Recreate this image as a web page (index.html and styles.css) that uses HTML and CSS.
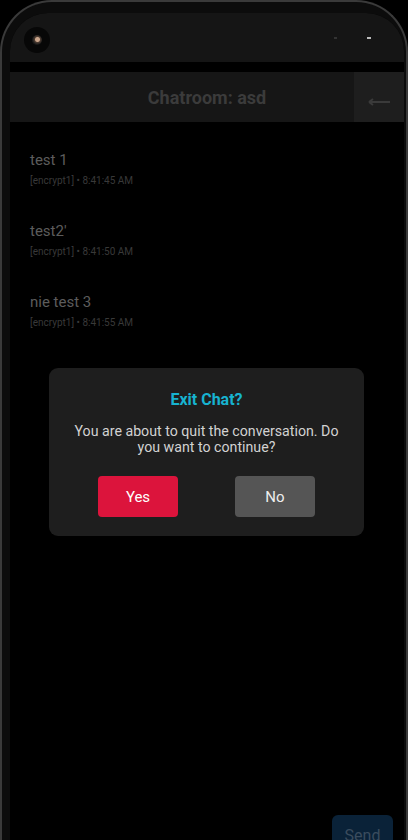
FILE: index.html
```html
<!DOCTYPE html>
<html>
<head>
<meta charset="utf-8">
<link rel="stylesheet" href="styles.css">
</head>
<body>
<div class="phone">
  <div class="speaker"></div>
  <div class="screen">
    <div class="statusbar">
      <div class="camera"><div class="lens"></div></div>
      <div class="status-icons"><span class="dot dim"></span><span class="dot"></span></div>
    </div>
    <div class="gap"></div>
    <div class="header">
      <div class="title">Chatroom: asd</div>
      <button class="back">
        <svg width="24" height="10" viewBox="0 0 24 10"><path d="M2 5H23M2 5L6 2M2 5L6 8" stroke="#3a3a3a" stroke-width="2" fill="none"/></svg>
      </button>
    </div>
    <div class="messages">
      <div class="msg"><div class="text">test 1</div><div class="meta">[encrypt1] • 8:41:45 AM</div></div>
      <div class="msg"><div class="text">test2'</div><div class="meta">[encrypt1] • 8:41:50 AM</div></div>
      <div class="msg"><div class="text">nie test 3</div><div class="meta">[encrypt1] • 8:41:55 AM</div></div>
    </div>
    <div class="footer"><button class="send">Send</button></div>
    <div class="dialog">
      <div class="dlg-title">Exit Chat?</div>
      <div class="dlg-body">You are about to quit the conversation. Do you want to continue?</div>
      <div class="dlg-actions">
        <button class="btn yes">Yes</button>
        <button class="btn no">No</button>
      </div>
    </div>
  </div>
</div>
</body>
</html>
```
FILE: styles.css
```css
* { box-sizing: border-box; }
html, body { margin: 0; padding: 0; background: #000; }
body { font-family: Roboto, "Noto Sans", sans-serif; width: 408px; height: 840px; overflow: hidden; }
.phone {
  position: relative;
  width: 408px; height: 840px;
  background: #0c0c0c;
  border: 2px solid #3a3a3a;
  border-bottom: none;
  border-radius: 52px 52px 0 0;
  padding: 11px 2px 0 8px;
  overflow: hidden;
}
.speaker {
  position: absolute; top: -2px; left: 160px; width: 88px; height: 2px; background: #222;
}
.screen {
  position: relative;
  height: 100%;
  background: #000;
  border-radius: 38px 38px 0 0;
  overflow: hidden;
  display: flex; flex-direction: column;
}
.statusbar {
  height: 49px; background: #151515;
  display: flex; align-items: center; justify-content: space-between;
  padding: 4px 33px 0 14px;
  flex-shrink: 0;
}
.camera {
  width: 26px; height: 26px; border-radius: 50%; background: #070707;
  display: flex; align-items: center; justify-content: center;
}
.lens {
  width: 10px; height: 10px; border-radius: 50%;
  background: radial-gradient(circle at 55% 45%, #c9a48a 0 2px, #4a3a30 3px, #1a1a1a 5px);
}
.status-icons { display: flex; gap: 30px; align-items: center; margin-top: -4px; }
.dot { width: 4px; height: 2px; background: #bbb; }
.dot.dim { width: 3px; background: #333; }
.gap { height: 10px; flex-shrink: 0; }
.header {
  height: 50px; background: #161616; display: flex; align-items: center; flex-shrink: 0;
}
.title {
  flex: 1; text-align: center; color: #3b3b3b; font-weight: 700; font-size: 18px; padding-left: 50px;
}
.back {
  width: 50px; height: 50px; background: #1e1e1e; border: none; padding: 10px 0 0 0;
  display: flex; align-items: center; justify-content: center;
}
.messages { flex: 1; padding: 28px 20px 0 20px; }
.msg { height: 71px; }
.text { color: #5c5c5c; font-size: 15px; line-height: 20px; }
.meta { color: #393939; font-size: 10px; line-height: 14px; margin-top: 4px; }
.footer { display: flex; justify-content: flex-end; padding-right: 11px; height: 25px; flex-shrink: 0; }
.send {
  width: 61px; height: 40px; background: #0a2238; border: none; border-radius: 6px;
  color: #3a4c5e; font-family: inherit; font-size: 16px; line-height: 20px;
  padding: 11px 0 0 0;
  display: flex; justify-content: center; align-items: flex-start;
  align-self: flex-start;
}
.dialog {
  position: absolute; left: 39px; top: 355px; width: 315px; height: 168px;
  background: #1e1e1e; border-radius: 9px;
  display: flex; flex-direction: column; align-items: center;
  padding: 22px 18px 0 18px;
}
.dlg-title { color: #17b3d0; font-weight: 700; font-size: 16px; line-height: 20px; }
.dlg-body {
  color: #d2d2d2; font-size: 14.2px; line-height: 16px; text-align: center; margin-top: 13px;
}
.dlg-actions { display: flex; gap: 57px; margin-top: 21px; }
.btn {
  width: 80px; height: 41px; border: none; border-radius: 4px;
  color: #fff; font-family: inherit; font-size: 15px;
}
.yes { background: #dc143c; }
.no { background: #555555; color: #eee; }
```
